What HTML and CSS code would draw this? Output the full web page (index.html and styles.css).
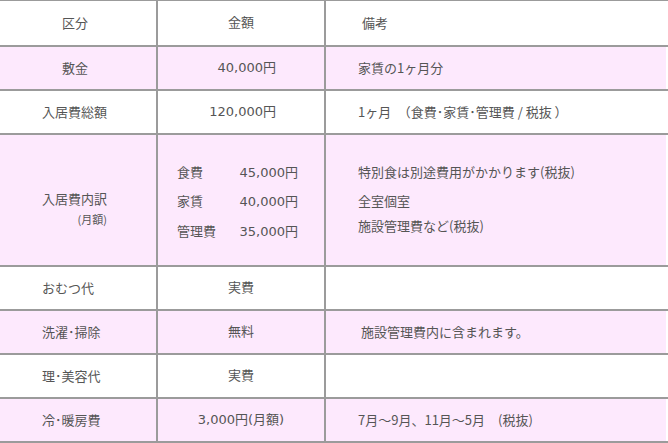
FILE: index.html
```html
<!DOCTYPE html>
<html lang="ja">
<head>
<meta charset="utf-8">
<link rel="stylesheet" href="styles.css">
</head>
<body>
<table class="fees">
  <tr class="head">
    <td class="c1 indent">区分</td>
    <td class="c2">金額</td>
    <td class="c3 note-head">備考</td>
  </tr>
  <tr class="pink">
    <td class="c1 indent">敷金</td>
    <td class="c2 amount">40,000円</td>
    <td class="c3">家賃の1ヶ月分</td>
  </tr>
  <tr>
    <td class="c1">入居費総額</td>
    <td class="c2 amount">120,000円</td>
    <td class="c3">1ヶ月　（食費･家賃･管理費 / 税抜 ）</td>
  </tr>
  <tr class="pink tall">
    <td class="c1">
      <div class="label-block">
        <span>入居費内訳</span>
        <span class="sub">(月額)</span>
      </div>
    </td>
    <td class="c2 top">
      <div class="breakdown">
        <span>食費</span><span class="num">45,000円</span>
        <span>家賃</span><span class="num">40,000円</span>
        <span>管理費</span><span class="num">35,000円</span>
      </div>
    </td>
    <td class="c3 top">
      <div class="notes">
        <p>特別食は別途費用がかかります(税抜)</p>
        <p class="n2">全室個室</p>
        <p class="n3">施設管理費など(税抜)</p>
      </div>
    </td>
  </tr>
  <tr>
    <td class="c1">おむつ代</td>
    <td class="c2">実費</td>
    <td class="c3"></td>
  </tr>
  <tr class="pink">
    <td class="c1">洗濯･掃除</td>
    <td class="c2">無料</td>
    <td class="c3 shift">施設管理費内に含まれます。</td>
  </tr>
  <tr>
    <td class="c1">理･美容代</td>
    <td class="c2">実費</td>
    <td class="c3"></td>
  </tr>
  <tr class="pink">
    <td class="c1">冷･暖房費</td>
    <td class="c2">3,000円(月額)</td>
    <td class="c3">7月～9月、11月～5月　(税抜)</td>
  </tr>
</table>
</body>
</html>
```
FILE: styles.css
```css
html, body {
  margin: 0;
  padding: 0;
  background: #ffffff;
}

.fees {
  width: 668px;
  border-collapse: separate;
  border-spacing: 0;
  border-top: 1px solid #9b9b9b;
  font-family: "Noto Sans CJK JP", "Liberation Sans", sans-serif;
  font-size: 13px;
  color: #555555;
  table-layout: fixed;
}

.fees td {
  height: 42px;
  padding: 0;
  border-bottom: 2px solid #9b9b9b;
  vertical-align: middle;
  line-height: 20px;
  white-space: nowrap;
}

.fees .head td {
  height: 44px;
}

.fees .tall td {
  height: 130px;
}

.pink td {
  background: #fde9fd;
}

.c1 {
  width: 158px;
  border-right: 2px solid #9b9b9b;
  padding-left: 42px !important;
  text-align: left;
  box-sizing: border-box;
}

.c1.indent {
  padding-left: 62px !important;
}

.c2 {
  width: 168px;
  box-sizing: border-box;
  border-right: 2px solid #9b9b9b;
  text-align: center;
  font-family: "DejaVu Sans", "Noto Sans CJK JP", sans-serif;
}

.c2.amount {
  text-align: right;
  padding-right: 48px !important;
}

.c3 {
  padding-left: 32px !important;
  text-align: left;
  box-shadow: inset -2px 0 0 #ffffff;
}

.c3.note-head {
  padding-left: 36px !important;
}

.c3.shift {
  padding-left: 35px !important;
}

.top {
  vertical-align: top !important;
}

.label-block {
  display: flex;
  width: max-content;
  flex-direction: column;
  align-items: flex-end;
  margin-top: 18px;
}

.label-block span {
  line-height: 20px;
}

.label-block .sub {
  font-size: 11px;
}

.breakdown {
  display: grid;
  grid-template-columns: 60px 61px;
  grid-auto-rows: 29.5px;
  align-items: center;
  justify-items: start;
  text-align: left;
  margin: 23px 0 0 19px;
}

.breakdown .num {
  justify-self: end;
  text-align: right;
}

.notes {
  padding-top: 27px;
}

.notes p {
  margin: 0;
  line-height: 20px;
}

.notes .n2 {
  margin-top: 9px;
}

.notes .n3 {
  margin-top: 5px;
}
```
